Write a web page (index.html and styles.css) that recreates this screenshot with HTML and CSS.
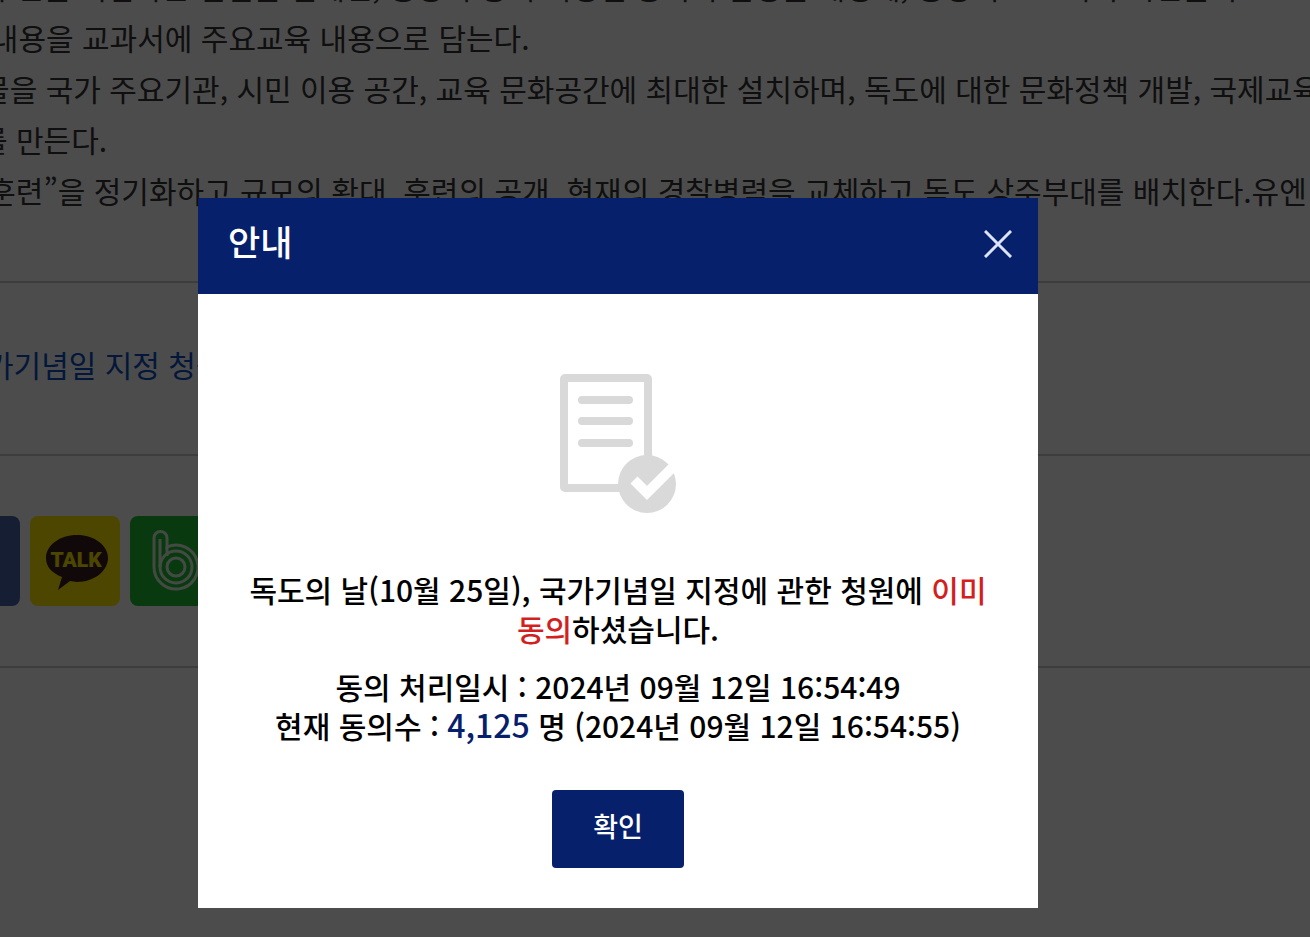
FILE: index.html
```html
<!DOCTYPE html>
<html lang="ko">
<head>
    <meta charset="UTF-8">
    <meta name="viewport" content="width=device-width, initial-scale=1.0">
    <title>안내</title>
    <link rel="stylesheet" href="styles.css">
</head>
<body>
    <main class="page">
        <div class="content">
            <p>· 한독 수련을 기념하는 헌신을 전세련, 중앙의 공식 지정인 중의의 헌정을 개정에, 중앙의 소으의의 시련들의</p>
            <p>주요한내용을 교과서에 주요교육 내용으로 담는다.</p>
            <p>- 상징물을 국가 주요기관, 시민 이용 공간, 교육 문화공간에 최대한 설치하며, 독도에 대한 문화정책 개발, 국제교육</p>
            <p>정, 제를 만든다.</p>
            <p>독도 1훈련”을 정기화하고 규모의 확대, 훈련의 공개, 현재의 경찰병력을 교체하고 독도 상주부대를 배치한다.유엔</p>
        </div>
        <div class="link-row">
            <a href="#">날, 국가기념일 지정 청원</a>
        </div>
        <div class="share-row">
            <a class="share facebook" href="#" aria-label="페이스북"></a>
            <a class="share kakao" href="#" aria-label="카카오톡">
                <svg viewBox="0 0 90 90" width="90" height="90">
                    <path d="M47 19c17 0 31 10 31 23S64 66 47 66l-7-1-12 9 4-13C22 57 16 51 16 42c0-13 14-23 31-23z" fill="#3b1c1e"/>
                    <text x="46" y="51" text-anchor="middle" class="talk">TALK</text>
                </svg>
            </a>
            <a class="share band" href="#" aria-label="밴드">
                <svg viewBox="0 0 90 90" width="90" height="90" fill="none" stroke="#e4f5e4" stroke-width="3">
                    <path d="M24 51V22a6 6 0 0 1 13 0v9A22 22 0 1 1 24 51z"/>
                    <path d="M30 51V23M37 31v9"/>
                    <circle cx="46" cy="51" r="16"/>
                    <circle cx="46" cy="51" r="9"/>
                </svg>
            </a>
        </div>
    </main>

    <div class="dim">
        <div class="modal" role="dialog" aria-modal="true" aria-labelledby="modal-title">
            <div class="modal-header">
                <h1 id="modal-title">안내</h1>
                <button type="button" class="close" aria-label="닫기">
                    <svg viewBox="0 0 28 28" width="28" height="28"><path d="M1 1l26 26M27 1L1 27" stroke="#dbe4fa" stroke-width="3"/></svg>
                </button>
            </div>
            <div class="modal-body">
                <svg class="doc-icon" viewBox="0 0 116 140" width="116" height="140">
                    <rect x="4" y="4" width="84" height="110" rx="1" fill="none" stroke="#d9d9d9" stroke-width="8"/>
                    <path d="M22 26h47M22 47h47M22 69h47" stroke="#d9d9d9" stroke-width="8" stroke-linecap="round"/>
                    <circle cx="87" cy="110" r="29" fill="#d9d9d9"/>
                    <path d="M74 106l13 13 25-25" fill="none" stroke="#fff" stroke-width="10"/>
                </svg>
                <p class="message">독도의 날(10월 25일), 국가기념일 지정에 관한 청원에 <strong>이미 동의</strong>하셨습니다.</p>
                <p class="detail">동의 처리일시 : 2024년 09월 12일 16:54:49<br>현재 동의수 : <span class="count">4,125</span> 명 (2024년 09월 12일 16:54:55)</p>
                <button type="button" class="confirm">확인</button>
            </div>
        </div>
    </div>
</body>
</html>
```
FILE: styles.css
```css
* {
    box-sizing: border-box;
}
body {
    margin: 0;
    min-height: 100vh;
    overflow: hidden;
    font-family: "Noto Sans CJK KR", "Noto Sans CJK JP", sans-serif;
    font-size: 30px;
    color: #333;
    background-color: #fff;
}
p, h1 {
    margin: 0;
}
.page {
    display: flow-root;
}
.content, .link-row, .share-row {
    border-bottom: 2px solid #ccc;
}
.content {
    margin-top: -39px;
    margin-left: -92px;
    padding-bottom: 65px;
    white-space: nowrap;
    line-height: 51px;
}
.link-row {
    margin-left: -86px;
    padding: 56px 0 64px;
    line-height: 51px;
}
.link-row a {
    color: #0b4fc4;
    text-decoration: none;
}
.share-row {
    display: flex;
    gap: 10px;
    margin-left: -70px;
    padding: 60px 0;
}
.share {
    width: 90px;
    height: 90px;
    border-radius: 8px;
    overflow: hidden;
}
.facebook {
    background-color: #4a66ad;
}
.kakao {
    background-color: #ffec00;
}
.band {
    background-color: #20c030;
}
.talk {
    font-family: Roboto, sans-serif;
    font-size: 21px;
    font-weight: 900;
    fill: #ffec00;
}
.dim {
    position: fixed;
    inset: 0;
    padding: 198px 272px 29px 198px;
    background-color: rgba(0, 0, 0, 0.7);
}
.modal {
    background-color: #fff;
    color: #000;
    font-weight: 500;
}
.modal-header {
    display: flex;
    align-items: center;
    justify-content: space-between;
    height: 96px;
    padding: 0 26px 4px 30px;
    background-color: #06206c;
    color: #fff;
}
.modal-header h1 {
    padding-bottom: 6px;
    font-size: 35px;
    font-weight: 500;
    line-height: 40px;
}
.close {
    display: flex;
    padding: 0;
    border: 0;
    background: none;
    cursor: pointer;
}
.modal-body {
    padding: 80px 40px 40px;
    text-align: center;
    line-height: 39px;
    word-break: keep-all;
}
.doc-icon {
    display: block;
    margin: 0 auto 56px;
}
.message {
    margin-bottom: 19px;
}
.message strong {
    color: #d31f1f;
    font-weight: 500;
}
.count {
    color: #06206c;
    font-size: 32px;
    line-height: 1;
}
.confirm {
    display: block;
    width: 132px;
    height: 78px;
    margin: 45px auto 0;
    padding: 0 0 8px;
    border: 0;
    border-radius: 4px;
    background-color: #06206c;
    color: #fff;
    font: inherit;
    font-size: 27px;
    cursor: pointer;
}
```
